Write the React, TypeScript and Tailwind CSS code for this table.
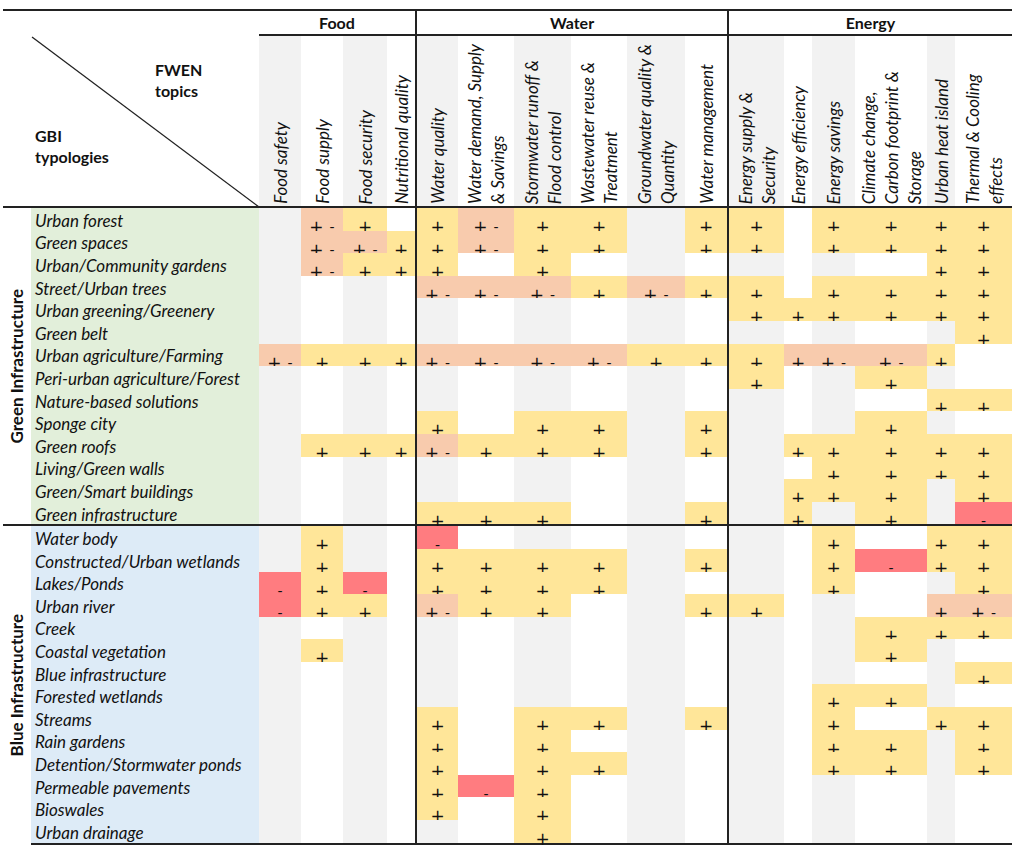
import React from 'react';

type Row = { name: string; cells: string };

const headers: string[][] = [
  ['Food safety'],
  ['Food supply'],
  ['Food security'],
  ['Nutritional quality'],
  ['Water quality'],
  ['Water demand, Supply', '& Savings'],
  ['Stormwater runoff &', 'Flood control'],
  ['Wastewater reuse &', 'Treatment'],
  ['Groundwater quality &', 'Quantity'],
  ['Water management'],
  ['Energy supply &', 'Security'],
  ['Energy efficiency'],
  ['Energy savings'],
  ['Climate change,', 'Carbon footprint &', 'Storage'],
  ['Urban heat island'],
  ['Thermal & Cooling', 'effects'],
];

// . empty, y = +, s = + -, S = + on salmon, r = -
const green: Row[] = [
  { name: 'Urban forest', cells: '.sy.ysyy.yy.yyyy' },
  { name: 'Green spaces', cells: '.ssyysyy.yy.yyyy' },
  { name: 'Urban/Community gardens', cells: '.syyy.y.......yy' },
  { name: 'Street/Urban trees', cells: '....sssysyy.yyyy' },
  { name: 'Urban greening/Greenery', cells: '..........yyyyyy' },
  { name: 'Green belt', cells: '...............y' },
  { name: 'Urban agriculture/Farming', cells: 'syyyssssyyySssy.' },
  { name: 'Peri-urban agriculture/Forest', cells: '..........y..y..' },
  { name: 'Nature-based solutions', cells: '..............yy' },
  { name: 'Sponge city', cells: '....y.yy.y...y..' },
  { name: 'Green roofs', cells: '.yyysyyy.y.yyyyy' },
  { name: 'Living/Green walls', cells: '............yyyy' },
  { name: 'Green/Smart buildings', cells: '...........yyy.y' },
  { name: 'Green infrastructure', cells: '....yyy..y.y.y.r' },
];

const blue: Row[] = [
  { name: 'Water body', cells: '.y..r.......y.yy' },
  { name: 'Constructed/Urban wetlands', cells: '.y..yyyy.y..yryy' },
  { name: 'Lakes/Ponds', cells: 'ryr.yyyy....y..y' },
  { name: 'Urban river', cells: 'ryy.syy..yy...Ss' },
  { name: 'Creek', cells: '.............yyy' },
  { name: 'Coastal vegetation', cells: '.y...........y..' },
  { name: 'Blue infrastructure', cells: '...............y' },
  { name: 'Forested wetlands', cells: '............yy..' },
  { name: 'Streams', cells: '....y.yy.y..y.yy' },
  { name: 'Rain gardens', cells: '....y.y.....yy.y' },
  { name: 'Detention/Stormwater ponds', cells: '....y.yy....yy.y' },
  { name: 'Permeable pavements', cells: '....yry.........' },
  { name: 'Bioswales', cells: '....y.y.........' },
  { name: 'Urban drainage', cells: '......y.........' },
];

function DataCell({ v, i }: { v: string; i: number }) {
  const bg =
    v === 'y'
      ? 'bg-[#FFE699]'
      : v === 's' || v === 'S'
        ? 'bg-[#F8CBAD]'
        : v === 'r'
          ? 'bg-[#FF7C80]'
          : i % 2 === 0
            ? 'bg-[#F2F2F2]'
            : 'bg-white';
  const line = i === 4 || i === 10 ? 'border-l-2 border-[#222]' : '';
  return (
    <div className={`flex h-full items-start justify-center gap-[6px] font-['DejaVu_Sans',sans-serif] ${bg} ${line}`}>
      {(v === 'y' || v === 's' || v === 'S') && <span className="mt-[7px] text-[17px]">+</span>}
      {(v === 's' || v === 'r') && <span className="mt-[9px] text-[14px]">-</span>}
    </div>
  );
}

function Section({ title, rows, last }: { title: string; rows: Row[]; last?: boolean }) {
  const labelBg = last ? 'bg-[#DDEBF7]' : 'bg-[#E2EFDA]';
  return (
    <div className={`flex ${last ? '' : 'border-b-2 border-[#222]'}`}>
      <div className="flex w-[28px] items-center justify-center">
        <span className="rotate-180 whitespace-nowrap text-[17px] font-bold [writing-mode:vertical-rl]">{title}</span>
      </div>
      <div className={`flex flex-col ${last ? 'border-b-2 border-[#222]' : ''}`}>
        {rows.map((r) => (
          <div
            key={r.name}
            className="grid h-[22.6px] grid-cols-[228px_42px_42px_44px_28px_43px_56px_57px_56px_58px_42px_57px_28px_43px_72px_28px_57px] grid-rows-[22.6px]"
          >
            <div className={`flex items-center whitespace-nowrap pl-[4px] pt-[3px] text-[17px] italic leading-[20px] ${labelBg}`}>
              {r.name}
            </div>
            {r.cells.split('').map((v, i) => (
              <DataCell key={i} v={v} i={i} />
            ))}
          </div>
        ))}
      </div>
    </div>
  );
}

export default function App() {
  return (
    <div className="min-h-[859px] bg-white font-[Lato,sans-serif] text-[#111]">
      <div className="ml-[3px] w-[1009px] pt-[9px]">
        <div className="border-t-2 border-[#222]" />

        {/* header */}
        <div className="flex h-[197px] border-b-2 border-[#222]">
          <div className="relative flex w-[256px] flex-col">
            <svg className="absolute inset-0" width="256" height="195">
              <line x1="29" y1="26" x2="256" y2="196" stroke="#222" strokeWidth="1.3" />
            </svg>
            <div className="pl-[152px] pt-[48px] text-[16px] font-bold leading-[21px]">
              FWEN
              <br />
              topics
            </div>
            <div className="pl-[32px] pt-[24px] text-[16px] font-bold leading-[21px]">
              GBI
              <br />
              typologies
            </div>
          </div>
          <div className="flex flex-col">
            <div className="flex h-[25px] border-b-2 border-[#222] text-[16px] font-bold">
              <div className="flex w-[156px] items-center justify-center">Food</div>
              <div className="flex w-[312px] items-center justify-center border-l-2 border-[#222]">Water</div>
              <div className="flex w-[285px] items-center justify-center border-l-2 border-[#222]">Energy</div>
            </div>
            <div className="grid flex-1 grid-cols-[42px_42px_44px_28px_43px_56px_57px_56px_58px_42px_57px_28px_43px_72px_28px_57px]">
              {headers.map((lines, i) => (
                <div
                  key={i}
                  className={`flex items-end justify-center pb-[2px] ${i % 2 === 0 ? 'bg-[#F2F2F2]' : 'bg-white'} ${
                    i === 4 || i === 10 ? 'border-l-2 border-[#222]' : ''
                  }`}
                >
                  <div className="rotate-180 whitespace-nowrap text-[17px] italic leading-[23px] [writing-mode:vertical-rl]">
                    {lines.map((l) => (
                      <div key={l}>{l}</div>
                    ))}
                  </div>
                </div>
              ))}
            </div>
          </div>
        </div>

        <Section title="Green Infrastructure" rows={green} />
        <Section title="Blue Infrastructure" rows={blue} last />
      </div>
    </div>
  );
}
